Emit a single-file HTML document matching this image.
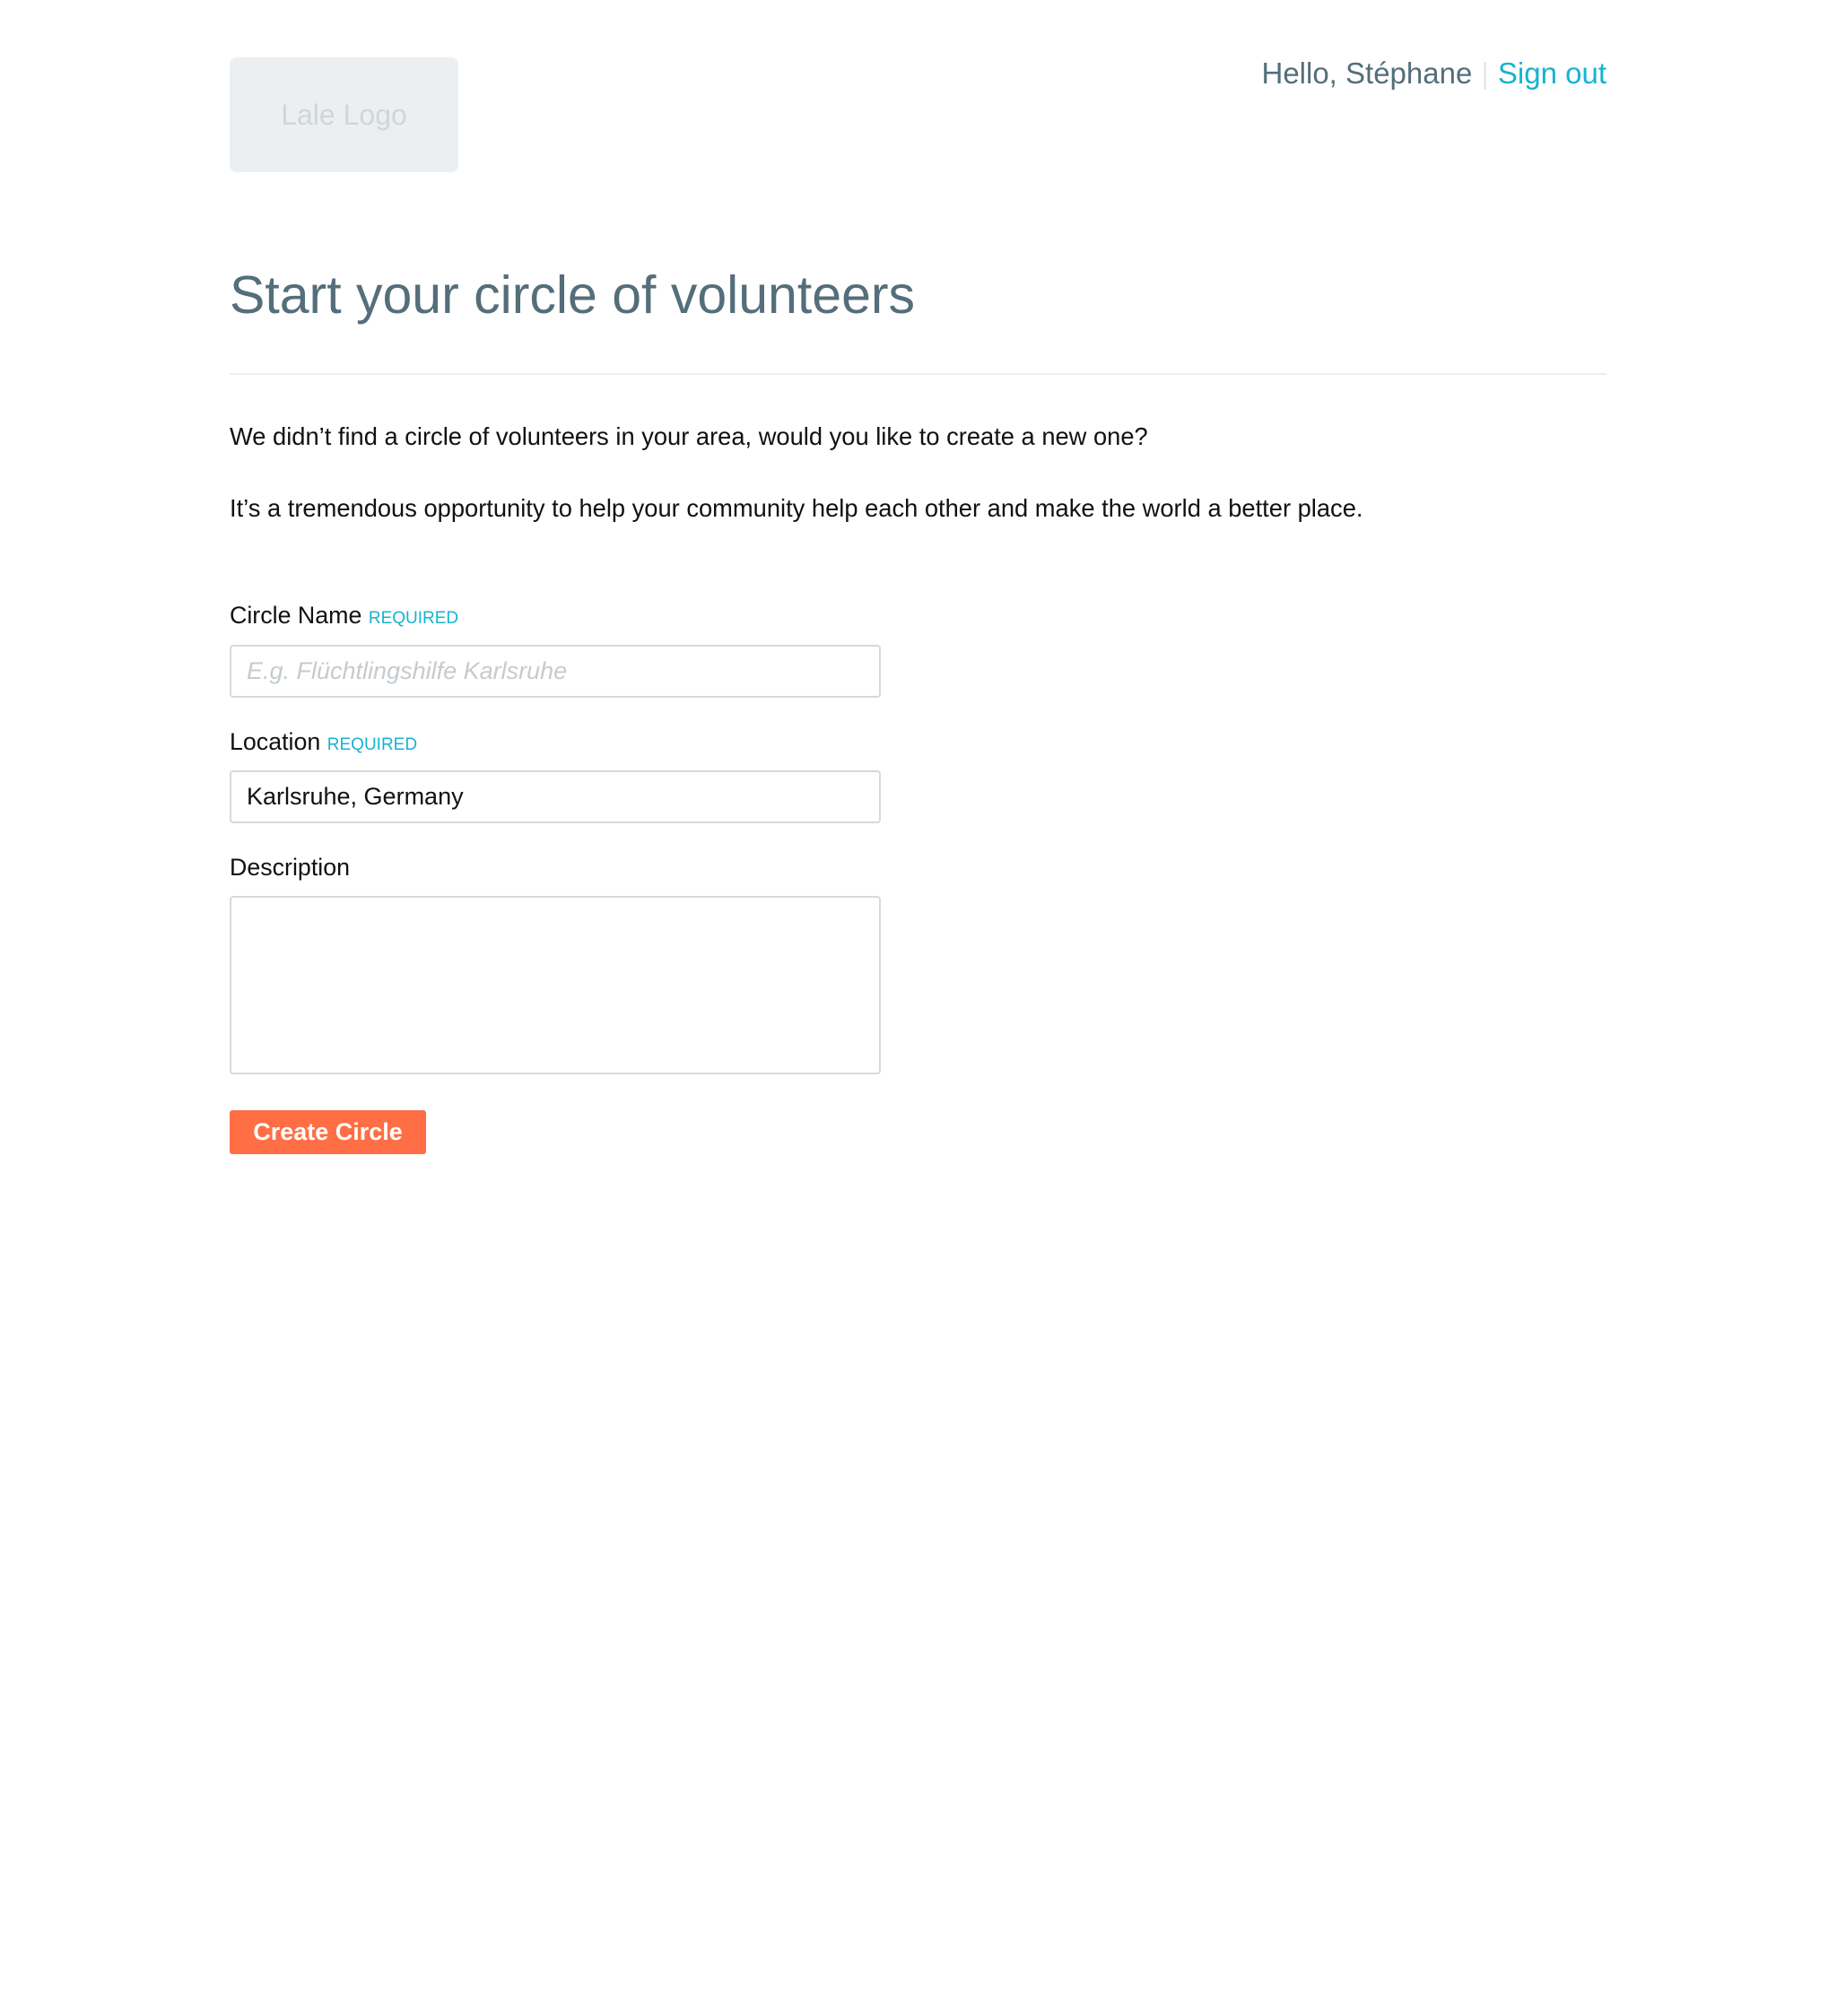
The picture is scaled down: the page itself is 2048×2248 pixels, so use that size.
<!DOCTYPE html>
<html><head><meta charset="utf-8"><style>
*{box-sizing:border-box;margin:0;padding:0}
body{width:2048px;height:2248px;background:#fff;font-family:"Liberation Sans",sans-serif;color:#111;position:relative}
.a{position:absolute;white-space:nowrap}
.logo{left:256px;top:64px;width:255px;height:128px;background:#eceff1;border-radius:8px;color:#cfd6da;font-size:32px;display:flex;align-items:center;justify-content:center}
.hello{right:257px;top:63px;font-size:33px;color:#546e7a}
.hello .s{color:#e3e8ec;margin:0 10px}
.hello .o{color:#17b3d0}
h1{position:absolute;left:256px;top:295px;font-size:59px;font-weight:normal;color:#546e7a}
.hr{left:256px;top:416px;width:1535px;height:2px;background:#eceff1}
.p{left:256px;font-size:27.3px}
.lab{left:256px;font-size:26.8px}
.lab span{color:#17b3d0;font-size:19px}
.in{left:256px;width:726px;border:2px solid #d6d9db;border-radius:4px;font-size:27px;padding-left:17px;display:flex;align-items:center}
.btn{left:256px;top:1238px;width:219px;height:49px;background:#ff6e44;color:#fff;font-weight:bold;font-size:27px;border-radius:3px;display:flex;align-items:center;justify-content:center}
</style></head><body>
<div class="a logo">Lale Logo</div>
<div class="a hello">Hello, Stéphane<span class="s">|</span><span class="o">Sign out</span></div>
<h1>Start your circle of volunteers</h1>
<div class="a hr"></div>
<div class="a p" style="top:471px">We didn’t find a circle of volunteers in your area, would you like to create a new one?</div>
<div class="a p" style="top:551px">It’s a tremendous opportunity to help your community help each other and make the world a better place.</div>
<div class="a lab" style="top:671px">Circle Name <span>REQUIRED</span></div>
<div class="a in" style="top:719px;height:59px;color:#c5cbcf;font-style:italic">E.g. Flüchtlingshilfe Karlsruhe</div>
<div class="a lab" style="top:812px">Location <span>REQUIRED</span></div>
<div class="a in" style="top:859px;height:59px">Karlsruhe, Germany</div>
<div class="a lab" style="top:952px">Description</div>
<div class="a in" style="top:999px;height:199px"></div>
<div class="a btn">Create Circle</div>
</body></html>
